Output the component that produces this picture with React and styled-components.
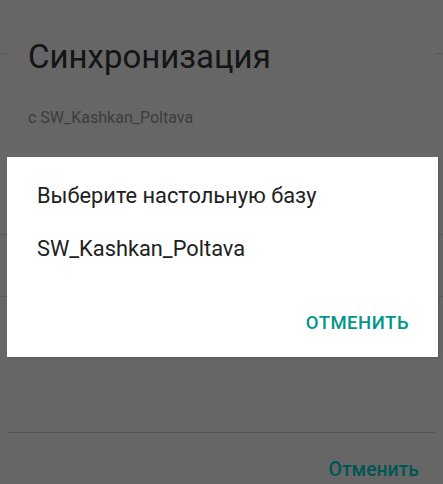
import React from 'react';
import styled, { createGlobalStyle } from 'styled-components';

const GlobalStyle = createGlobalStyle`
  html, body {
    margin: 0;
    padding: 0;
    background: #ffffff;
    overflow: hidden;
  }
  body {
    font-family: Roboto, "Noto Sans", "Liberation Sans", sans-serif;
    -webkit-font-smoothing: antialiased;
  }
`;

// activity under everything
const Screen = styled.div`
  position: relative;
  width: 443px;
  height: 484px;
  overflow: hidden;
  background: #ffffff;
`;

const ListRow = styled.div`
  height: ${p => p.h}px;
  border-bottom: 1px solid #dedede;
  box-sizing: border-box;
  display: flex;
  align-items: flex-start;
`;

const ProgressDot = styled.span`
  width: 2px;
  height: 2px;
  margin: 9px 0 0 198px;
  background: #00c2bb;
`;

// sync dialog (behind the picker)
const SyncDialog = styled.div`
  position: absolute;
  top: 0;
  left: 8px;
  width: 427px;
  height: 500px;
  background: #ffffff;
  display: flex;
  flex-direction: column;
`;

const SyncTitle = styled.h1`
  margin: 37px 0 0 20px;
  font-size: 33px;
  line-height: 40px;
  font-weight: 400;
  color: #363636;
`;

const SyncSubtitle = styled.p`
  margin: 31px 0 0 20px;
  font-size: 16px;
  line-height: 20px;
  color: #999999;
`;

const Spacer = styled.div`
  flex: 1;
`;

const SyncFooter = styled.div`
  height: 68px;
  border-top: 1px solid #cfcfcf;
  display: flex;
  justify-content: flex-end;
  align-items: flex-start;
  padding: 25px 16px 0 0;
  box-sizing: border-box;
`;

const SyncButton = styled.span`
  font-size: 19.4px;
  line-height: 24px;
  font-weight: 500;
  color: #00d6d0;
`;

const Scrim = styled.div`
  position: absolute;
  inset: 0;
  background: rgba(0, 0, 0, 0.6);
`;

// picker dialog on top
const PickerDialog = styled.div`
  position: absolute;
  top: 157px;
  left: 7px;
  width: 431px;
  height: 200px;
  background: #ffffff;
  box-shadow: 1px 1px 2px rgba(0, 0, 0, 0.15);
  display: flex;
  flex-direction: column;
  padding: 27px 29px 0 30px;
  box-sizing: border-box;
`;

const PickerTitle = styled.div`
  font-size: 21.8px;
  line-height: 24px;
  color: #212121;
`;

const PickerItem = styled.div`
  margin-top: 29px;
  font-size: 21.8px;
  line-height: 24px;
  color: #212121;
`;

const PickerActions = styled.div`
  margin-top: 52px;
  display: flex;
  justify-content: flex-end;
`;

const TextButton = styled.span`
  font-size: 18.5px;
  line-height: 20px;
  font-weight: 500;
  letter-spacing: 0.5px;
  color: #009688;
`;

export default function App() {
  return (
    <>
      <GlobalStyle />
      <Screen>
        <ListRow h={54}>
          <ProgressDot />
        </ListRow>
        <ListRow h={181} />
        <ListRow h={62} />

        <SyncDialog>
          <SyncTitle>Синхронизация</SyncTitle>
          <SyncSubtitle>с SW_Kashkan_Poltava</SyncSubtitle>
          <Spacer />
          <SyncFooter>
            <SyncButton>Отменить</SyncButton>
          </SyncFooter>
        </SyncDialog>

        <Scrim />

        <PickerDialog>
          <PickerTitle>Выберите настольную базу</PickerTitle>
          <PickerItem>SW_Kashkan_Poltava</PickerItem>
          <PickerActions>
            <TextButton>ОТМЕНИТЬ</TextButton>
          </PickerActions>
        </PickerDialog>
      </Screen>
    </>
  );
}
